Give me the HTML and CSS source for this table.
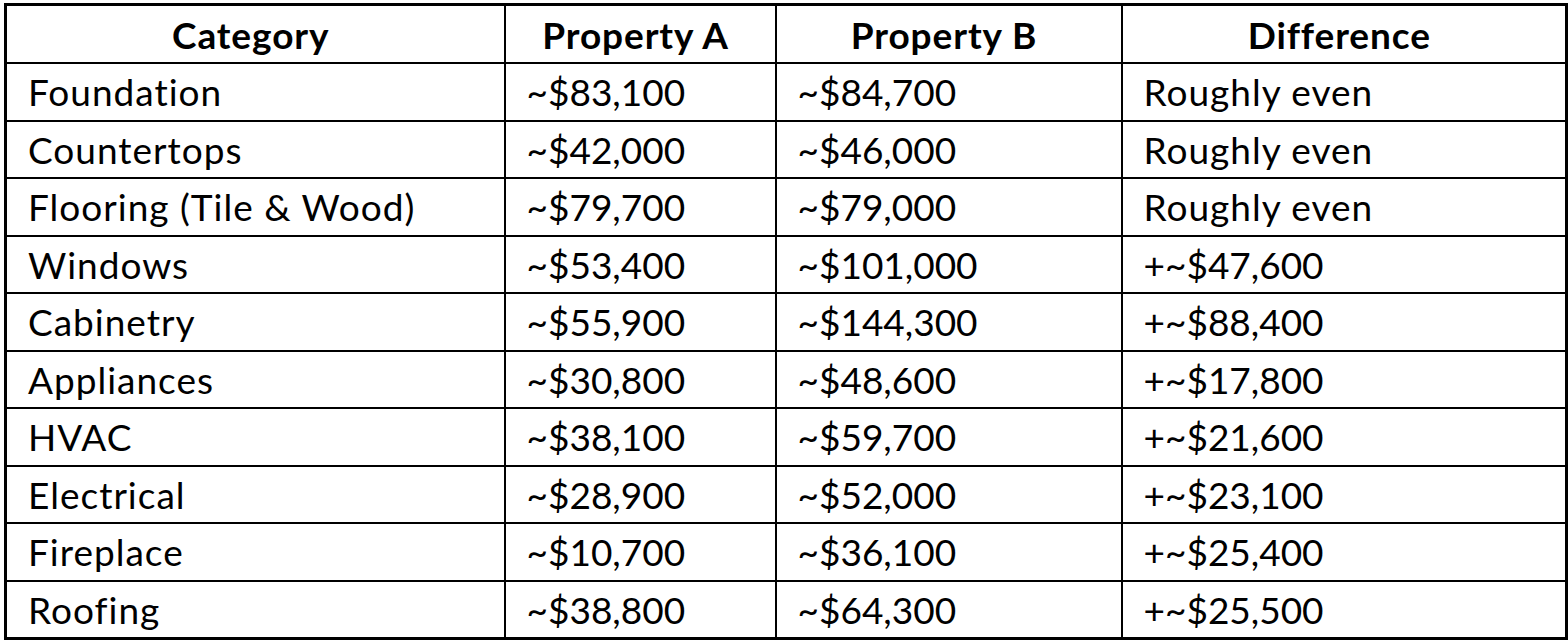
FILE: index.html
```html
<!DOCTYPE html>
<html lang="en">
<head>
<meta charset="utf-8">
<title>Property Cost Comparison</title>
<link rel="stylesheet" href="styles.css">
</head>
<body>
<table class="cost-table">
  <colgroup>
    <col class="col-cat">
    <col class="col-a">
    <col class="col-b">
    <col class="col-diff">
  </colgroup>
  <thead>
    <tr>
      <th>Category</th>
      <th>Property A</th>
      <th>Property B</th>
      <th>Difference</th>
    </tr>
  </thead>
  <tbody>
    <tr><td class="label">Foundation</td><td>~$83,100</td><td>~$84,700</td><td class="label">Roughly even</td></tr>
    <tr><td class="label">Countertops</td><td>~$42,000</td><td>~$46,000</td><td class="label">Roughly even</td></tr>
    <tr><td class="label">Flooring (Tile &amp; Wood)</td><td>~$79,700</td><td>~$79,000</td><td class="label">Roughly even</td></tr>
    <tr><td class="label">Windows</td><td>~$53,400</td><td>~$101,000</td><td>+~$47,600</td></tr>
    <tr><td class="label">Cabinetry</td><td>~$55,900</td><td>~$144,300</td><td>+~$88,400</td></tr>
    <tr><td class="label">Appliances</td><td>~$30,800</td><td>~$48,600</td><td>+~$17,800</td></tr>
    <tr><td class="label">HVAC</td><td>~$38,100</td><td>~$59,700</td><td>+~$21,600</td></tr>
    <tr><td class="label">Electrical</td><td>~$28,900</td><td>~$52,000</td><td>+~$23,100</td></tr>
    <tr><td class="label">Fireplace</td><td>~$10,700</td><td>~$36,100</td><td>+~$25,400</td></tr>
    <tr><td class="label">Roofing</td><td>~$38,800</td><td>~$64,300</td><td>+~$25,500</td></tr>
  </tbody>
</table>
</body>
</html>
```

FILE: styles.css
```css
html, body {
  margin: 0;
  padding: 0;
  background: #ffffff;
}

body {
  padding: 3px 0 0 4px;
  font-family: "Lato", "Liberation Sans", sans-serif;
  color: #000000;
}

.cost-table {
  border-collapse: collapse;
  table-layout: fixed;
  width: 1561px;
  border: 3px solid #000000;
  font-size: 37px;
}

.col-cat { width: 499px; }
.col-a { width: 271px; }
.col-b { width: 346px; }
.col-diff { width: 445px; }

.cost-table th,
.cost-table td {
  border: 2px solid #000000;
  height: 55.5px;
  padding: 0 0 0 21px;
  line-height: 1;
  vertical-align: middle;
  white-space: nowrap;
}

.cost-table th {
  font-weight: 700;
  text-align: center;
  padding: 0 9px 0 0;
  height: 56px;
  letter-spacing: 0.9px;
}

.cost-table td {
  font-weight: 400;
  text-align: left;
}

.cost-table td.label {
  letter-spacing: 1px;
}
```
